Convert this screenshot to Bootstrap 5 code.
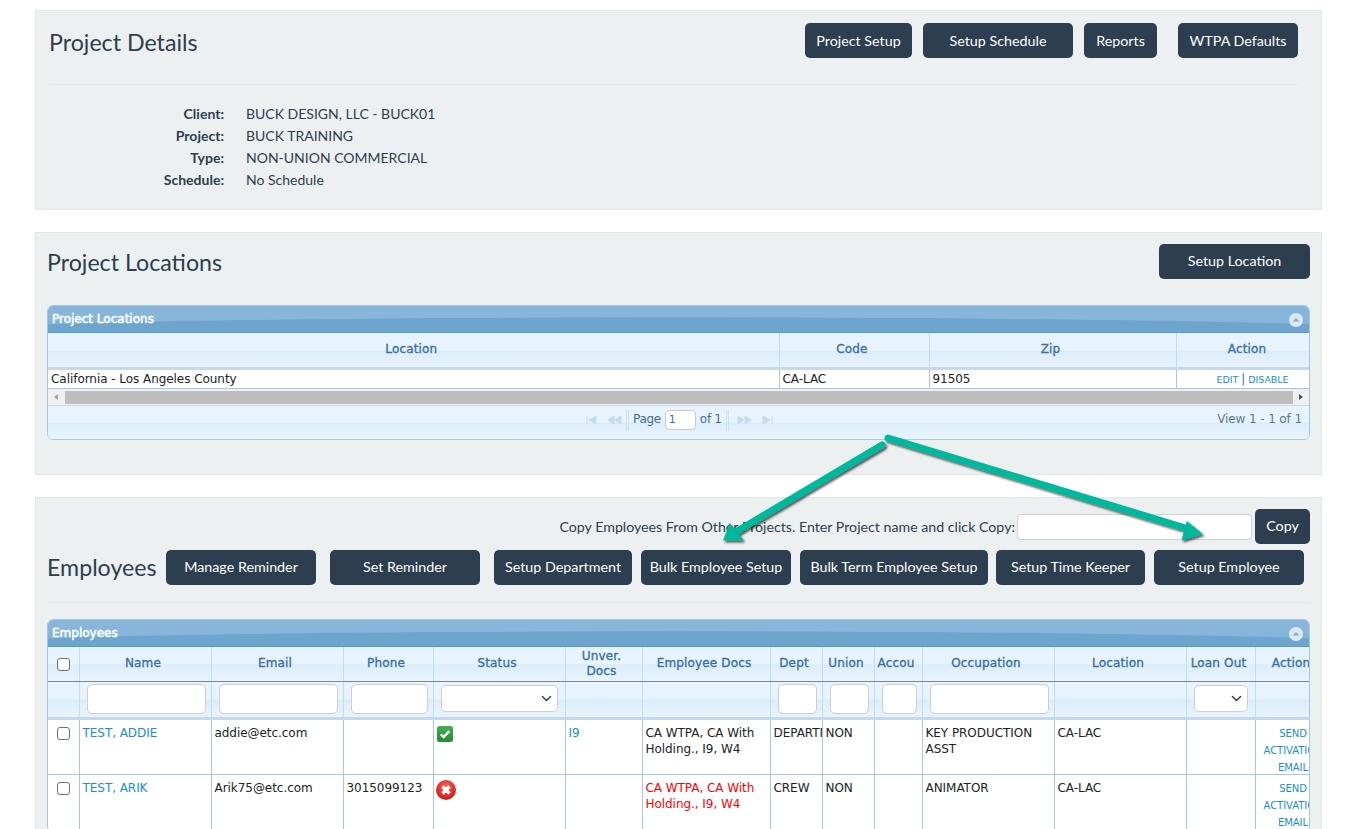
<!DOCTYPE html>
<html lang="en"><head><meta charset="utf-8"><title>Project</title>
<link rel="stylesheet" href="https://cdn.jsdelivr.net/npm/bootstrap@5.3.0/dist/css/bootstrap.min.css">
<style>
html,body{height:829px;overflow:hidden}
body{font-family:Lato,sans-serif;font-size:14px;color:#2c3e50;background:#fff;position:relative}
.pg{padding:10px 25px 0 35px}
.wl{background:#ecf0f1;border:1px solid #e3e7e8;margin-bottom:22px}
.w1{height:200px;padding:12px 23px 0 13px}
.w2{height:243px;padding:11px 11px 0 11px}
.w3{padding:11px 11px 0 11px;height:500px}
.ttl{font-size:23.2px;font-weight:400;color:#2c3e50;margin:0;line-height:34px}
.ttl-a{padding-top:2px}
.ttl-e{width:119px;flex:none;padding-bottom:2px}
.dk{background:#2c3e50;border:0;color:#fff;font-size:14.3px;height:35px;padding:0;border-radius:5px;line-height:35px;flex:none}
.dk:hover{background:#2c3e50;color:#fff}
.dk.up{padding-bottom:2px;line-height:33px}
.sep{border:0;border-top:1px solid #e3e7e8;opacity:1;margin:0}
.s1{margin-top:25px}
.dtl{margin-top:18px;line-height:22px;font-size:14px}
.dtl dt{width:175px;text-align:right;font-weight:700;margin:0;padding-right:0}
.dtl dd{margin:0 0 0 22px}
.b73{width:73px}.b107{width:107px}.b120{width:120px}.b150{width:150px}.b151{width:151px}.b138{width:138px}.b188{width:188px}.b149{width:149px}.b55{width:55px}
.ml11{margin-left:11px}.ml21{margin-left:21px}
.ml14{margin-left:14px}.ml9{margin-left:9px}.ml8{margin-left:8px}.ml3{margin-left:3px}
.mb26{margin-bottom:26px}
.gp{border:1px solid #a6c9e2;border-radius:6px;font-family:"DejaVu Sans",sans-serif;font-size:12px;overflow:hidden;background:#fff}
.gp-t{height:27px;color:#fff;font-weight:400;-webkit-text-stroke:.45px #fff;font-size:12px;line-height:27px;padding-left:4px;position:relative;background:radial-gradient(ellipse 60% 15px at 50% 100%,#6da5cf 96%,rgba(109,165,207,0) 100%),linear-gradient(#87b6da 50%,#7aaed5 100%);border-bottom:1px solid #4f9bd5}
.col-ic{position:absolute;right:6px;top:7px}
.grd{table-layout:fixed;margin:0;border-collapse:collapse;font-size:12px;letter-spacing:-.05px}
.grd>:not(caption)>*>*{padding:0 3px;border:0;border-right:1px solid #a6c9e2;background:transparent;box-shadow:none;color:#222;vertical-align:top;overflow:hidden}
.grd>thead>tr{background:linear-gradient(#e8f4fd 0,#e8f4fd 48%,#dcedfa 52%,#e8f4fd 100%)}
.grd>thead>tr>th{color:#3a70a8;text-align:center;vertical-align:middle;font-weight:400;-webkit-text-stroke:.35px #3a70a8;letter-spacing:.15px;line-height:15px;white-space:normal;border-right-color:#c3dcef;padding:0 5px 0 1px}
.grd>tbody>tr>td{border-bottom:1px solid #a6c9e2;line-height:16px}
.loc{width:1274px}
.loc>thead>tr>th{height:35px;border-bottom:3px solid #c4d9ec}
.loc>tbody>tr>td{height:18px;line-height:16px;padding-top:1px}
.loc>tbody>tr>td.act{padding-left:10px}
.sb{height:17px;background:#f0f0f0;border-bottom:1px solid #c4d9ec;padding:2px 16px 1px 17px;position:relative}
.sb-th{height:13px;background:#bebebe}
.tri-l,.tri-r{position:absolute;top:5px;width:0;height:0;border-top:3.5px solid transparent;border-bottom:3.5px solid transparent}
.tri-l{left:6px;border-right:4px solid #a3a3a3}
.tri-r{right:6px;border-left:4px solid #505050}
.pgr{height:33px;background:linear-gradient(#e8f4fd 0,#e8f4fd 48%,#dcedfa 52%,#e8f4fd 100%);color:#5a7fa5;font-size:12px;position:relative}
.pgr-c{position:absolute;left:538px;top:4px;height:21px;line-height:18px;letter-spacing:-.3px;color:#3f6c98;display:flex}
.pgr-v{position:absolute;right:7px;top:5px;line-height:16px;color:#5a7898;letter-spacing:-.1px}
.pgi{display:block;width:39px;height:21px}
.pgn{width:31px;height:20px;border:1px solid #c8c8c8;border-radius:4px;background:#fff;padding:0 3px;font-size:11px;line-height:18px;color:#3f6c98;display:block;margin:0 4px}
.pvs{border-left:1px solid #cfe0ee;border-right:1px solid #cfe0ee;width:3px;height:21px;display:block}
.pvs-a{margin:0 4px 0 1px}
.pvs-b{margin:0 8px 0 4px}
.lk{color:#1b8dcc;text-decoration:none}
.act{text-align:center;font-size:9.5px}
.act a{color:#1b8dcc;text-decoration:none}
.act span{color:#3a70a8;font-size:12px}
.emp{width:1283px}
.emp>thead>tr.hd>th{height:34px;border-bottom:1px solid #7f858a}
.emp>thead>tr.fl>th{height:37px;padding:2px 5px 0 7px;border-bottom:3px solid #c4d9ec;vertical-align:top}
.emp>tbody>tr>td{height:56px;padding-top:5px}
.emp>tbody>tr>td.act{padding:5px 0 0;font-size:10px;line-height:17px;white-space:nowrap;text-align:center}
.emp .act a{display:block;margin-bottom:-2px}
.fi{height:30px;padding:0 4px;border:1px solid #cfcfcf;border-radius:5px;min-height:0;font-size:12px;box-shadow:none}
.fs{height:27px;width:calc(100% - 2px);padding:0 4px;border:1px solid #cfcfcf;border-radius:5px;margin-top:1px;background-size:11px;background-position:right 5px center;min-height:0;box-shadow:none}
.chk{width:13px;height:13px;margin:0;border:1px solid #707070;border-radius:3px;float:none;display:block;margin-left:6px}
.grd thead .chk{margin-left:8px;margin-top:1px}
.emp tbody .chk{margin-top:2px}
.wide{overflow:hidden}
.copy-lbl{font-size:14.2px;margin-right:2px}
.cpi{width:235px;height:26px;border:1px solid #ced4da;border-radius:4px;padding:0 6px;flex:none;min-height:0}
.rowc{height:35px}
.rowe{margin-top:6px;height:35px}
.rowh{margin-top:17px}
.red{color:#f00!important}
.ic-x{margin-left:-1px;display:block}
.ic-c{display:block;margin-top:1px}
.arw{position:absolute;left:0;top:0;pointer-events:none}
</style></head><body>
<div class="pg">
<section class="wl w1">
 <div class="d-flex align-items-start">
  <h2 class="ttl ttl-a me-auto">Project Details</h2>
  <button class="btn dk b107">Project Setup</button><button class="btn dk b150 ml11">Setup Schedule</button><button class="btn dk b73 ml11">Reports</button><button class="btn dk b120 ml21">WTPA Defaults</button>
 </div>
 <hr class="sep s1">
 <dl class="dtl mb-0">
  <div class="d-flex"><dt>Client:</dt><dd>BUCK DESIGN, LLC - BUCK01</dd></div>
  <div class="d-flex"><dt>Project:</dt><dd>BUCK TRAINING</dd></div>
  <div class="d-flex"><dt>Type:</dt><dd>NON-UNION COMMERCIAL</dd></div>
  <div class="d-flex"><dt>Schedule:</dt><dd>No Schedule</dd></div>
 </dl>
</section>
<section class="wl w2">
 <div class="d-flex align-items-center justify-content-between mb26">
  <h2 class="ttl">Project Locations</h2>
  <button class="btn dk up b151">Setup Location</button>
 </div>
 <div class="gp">
  <div class="gp-t">Project Locations<svg class="col-ic" width="14" height="14" viewBox="0 0 14 14"><circle cx="7" cy="7" r="7" fill="#dbe9f5"/><path d="M3.5 8.500L7 5l3.500 3.500z" fill="#86a9c8"/></svg></div>
  <table class="table grd loc"><colgroup><col style="width:731px"><col style="width:150px"><col style="width:247px"><col style="width:146px"></colgroup>
  <thead><tr><th>Location</th><th>Code</th><th>Zip</th><th>Action</th></tr></thead>
  <tbody><tr><td>California - Los Angeles County</td><td>CA-LAC</td><td>91505</td><td class="act"><a href="#">EDIT</a> <span>|</span> <a href="#">DISABLE</a></td></tr></tbody></table>
  <div class="sb"><i class="tri-l"></i><div class="sb-th"></div><i class="tri-r"></i></div>
  <div class="pgr">
   <div class="pgr-c">
    <svg class="pgi" viewBox="0 0 39 21"><path d="M1 6v8M10 6l-7 4 7 4zM28 6l-6 4 6 4zM35 6l-6 4 6 4z" fill="#c4dcee" stroke="#c4dcee"/></svg><span class="pvs pvs-a"></span><span>Page</span><span class="pgn">1</span><span>of 1</span><span class="pvs pvs-b"></span><svg class="pgi" viewBox="0 0 39 21"><path d="M1 6l6 4-6 4zM8 6l6 4-6 4zM26 6l7 4-7 4zM35 6v8" fill="#c4dcee" stroke="#c4dcee"/></svg>
   </div>
   <div class="pgr-v">View 1 - 1 of 1</div>
  </div>
 </div>
</section>
<section class="wl w3">
 <div class="d-flex justify-content-end align-items-center rowc">
  <span class="copy-lbl">Copy Employees From Other Projects. Enter Project name and click Copy:</span>
  <input class="form-control cpi" type="text" aria-label="Project name"><button class="btn dk up b55 ml3">Copy</button>
 </div>
 <div class="d-flex align-items-center rowe">
  <h2 class="ttl ttl-e">Employees</h2>
  <button class="btn dk up b150">Manage Reminder</button><button class="btn dk up b150 ml14">Set Reminder</button><button class="btn dk up b138 ml14">Setup Department</button><button class="btn dk up b150 ml9">Bulk Employee Setup</button><button class="btn dk up b188 ml9">Bulk Term Employee Setup</button><button class="btn dk up b149 ml8">Setup Time Keeper</button><button class="btn dk up b150 ml9">Setup Employee</button>
 </div>
 <hr class="sep rowh">
 <div class="gp mt-3">
  <div class="gp-t">Employees<svg class="col-ic" width="14" height="14" viewBox="0 0 14 14"><circle cx="7" cy="7" r="7" fill="#dbe9f5"/><path d="M3.5 8.500L7 5l3.500 3.500z" fill="#86a9c8"/></svg></div>
  <div class="wide">
  <table class="table grd emp"><colgroup><col style="width:31px"><col style="width:132px"><col style="width:132px"><col style="width:90px"><col style="width:132px"><col style="width:77px"><col style="width:128px"><col style="width:52px"><col style="width:52px"><col style="width:48px"><col style="width:132px"><col style="width:132px"><col style="width:69px"><col style="width:76px"></colgroup>
  <thead>
  <tr class="hd"><th><input class="form-check-input chk" type="checkbox" aria-label="All"></th><th>Name</th><th>Email</th><th>Phone</th><th>Status</th><th>Unver. Docs</th><th>Employee Docs</th><th>Dept</th><th>Union</th><th>Accou</th><th>Occupation</th><th>Location</th><th>Loan Out</th><th>Action</th></tr>
  <tr class="fl"><th></th><th><input class="form-control fi" aria-label="Name"></th><th><input class="form-control fi" aria-label="Email"></th><th><input class="form-control fi" aria-label="Phone"></th><th><select class="form-select fs" aria-label="Status"><option></option></select></th><th></th><th></th><th><input class="form-control fi" aria-label="Dept"></th><th><input class="form-control fi" aria-label="Union"></th><th><input class="form-control fi" aria-label="Account"></th><th><input class="form-control fi" aria-label="Occupation"></th><th></th><th><select class="form-select fs" aria-label="Loan"><option></option></select></th><th></th></tr>
  </thead>
  <tbody>
  <tr><td><input class="form-check-input chk" type="checkbox" aria-label="Select"></td><td><a class="lk" href="#">TEST, ADDIE</a></td><td>addie@etc.com</td><td></td><td><svg class="ic-c" width="16" height="16" viewBox="0 0 16 16"><defs><linearGradient id="gg" x1="0" y1="0" x2="0" y2="1"><stop offset="0" stop-color="#45b04f"/><stop offset="1" stop-color="#248a35"/></linearGradient></defs><rect width="16" height="16" rx="2.5" fill="url(#gg)"/><path d="M3.800 8.300l2.900 2.800 5.500-6" fill="none" stroke="#fff" stroke-width="2.300"/></svg></td><td><a class="lk" href="#">I9</a></td><td>CA WTPA, CA With Holding., I9, W4</td><td class="text-nowrap">DEPARTMENT</td><td>NON</td><td></td><td>KEY PRODUCTION ASST</td><td>CA-LAC</td><td></td><td class="act"><a href="#">SEND<br>ACTIVATION<br>EMAIL</a></td></tr>
  <tr><td><input class="form-check-input chk" type="checkbox" aria-label="Select"></td><td><a class="lk" href="#">TEST, ARIK</a></td><td>Arik75@etc.com</td><td>3015099123</td><td><svg class="ic-x" width="20" height="20" viewBox="0 0 20 20"><defs><radialGradient id="rg" cx=".5" cy=".35" r=".7"><stop offset="0" stop-color="#f26a5f"/><stop offset=".6" stop-color="#e0302c"/><stop offset="1" stop-color="#b81c1c"/></radialGradient></defs><circle cx="10" cy="10" r="10" fill="url(#rg)"/><path d="M6.500 6.500l7 7M13.500 6.500l-7 7" stroke="#fff" stroke-width="3.200"/></svg></td><td></td><td class="red">CA WTPA, CA With Holding., I9, W4</td><td>CREW</td><td>NON</td><td></td><td>ANIMATOR</td><td>CA-LAC</td><td></td><td class="act"><a href="#">SEND<br>ACTIVATION<br>EMAIL</a></td></tr>
  </tbody></table>
  </div>
 </div>
</section>
</div>
<svg class="arw" width="1347" height="829" viewBox="0 0 1347 829" aria-hidden="true">
 <defs><filter id="sh" x="-10%" y="-10%" width="120%" height="120%"><feDropShadow dx="1.500" dy="2" stdDeviation="1.200" flood-color="#000" flood-opacity=".65"/></filter></defs>
 <g filter="url(#sh)" fill="#00b89c" stroke="#00b89c" stroke-linecap="round" stroke-linejoin="round">
  <path d="M882 445L734 533" stroke-width="7" fill="none"/>
  <path d="M724 540L743 540L730 524z" stroke-width="1"/>
  <path d="M888 438L1192 530" stroke-width="7" fill="none"/>
  <path d="M1202 534L1182 540L1187 522z" stroke-width="1"/>
 </g>
</svg>
<script src="https://cdn.jsdelivr.net/npm/bootstrap@5.3.0/dist/js/bootstrap.bundle.min.js"></script>
</body></html>
